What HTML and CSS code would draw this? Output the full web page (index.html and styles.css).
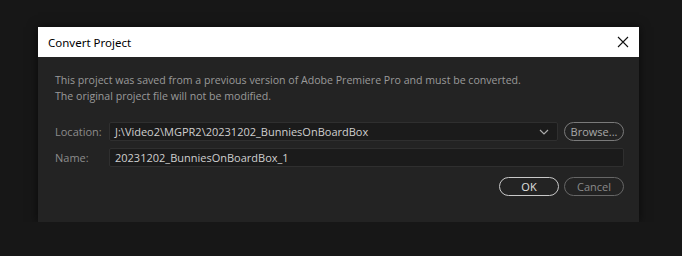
FILE: index.html
```html
<!DOCTYPE html>
<html lang="en">
<head>
    <meta charset="UTF-8">
    <title>Convert Project</title>
    <link rel="stylesheet" href="styles.css">
</head>
<body>
    <div class="dialog">
        <div class="titlebar">
            <span class="title">Convert Project</span>
            <svg class="close" width="12" height="12" viewBox="0 0 12 12">
                <path d="M1 1 L11 11 M11 1 L1 11" stroke="#111" stroke-width="1.1" fill="none"/>
            </svg>
        </div>
        <div class="content">
            <p class="message">This project was saved from a previous version of Adobe Premiere Pro and must be converted.<br>The original project file will not be modified.</p>
            <div class="row">
                <label>Location:</label>
                <div class="select">
                    <span>J:\Video2\MGPR2\20231202_BunniesOnBoardBox</span>
                    <svg width="10" height="6" viewBox="0 0 10 6"><path d="M1 1 L5 5 L9 1" stroke="#aaa" stroke-width="1.2" fill="none"/></svg>
                </div>
                <button class="btn">Browse...</button>
            </div>
            <div class="row">
                <label>Name:</label>
                <div class="input">20231202_BunniesOnBoardBox_1</div>
            </div>
            <div class="actions">
                <button class="btn primary">OK</button>
                <button class="btn muted">Cancel</button>
            </div>
        </div>
    </div>
</body>
</html>
```

FILE: styles.css
```css
body {
    margin: 0;
    background: #171717;
    font-family: 'Open Sans', 'Noto Sans', sans-serif;
    padding: 27px 0 0 38px;
}
.dialog {
    width: 601px;
    height: 195px;
    background: #232323;
    box-shadow: 0 0 10px rgba(0, 0, 0, 0.6);
}
.titlebar {
    height: 30px;
    background: #ffffff;
    display: flex;
    align-items: center;
    justify-content: space-between;
    padding: 0 10px 0 10px;
}
.title {
    font-family: 'Noto Sans', sans-serif;
    font-size: 11.5px;
    color: #000;
}
.content {
    padding: 0 15px 0 17px;
}
.message {
    margin: 0;
    padding-top: 15px;
    font-size: 10.6px;
    line-height: 16px;
    color: #9a9a9a;
    height: 34px;
}
.row {
    display: flex;
    align-items: center;
    height: 19px;
}
.row + .row {
    margin-top: 7px;
}
.message + .row {
    margin-top: 16px;
}
label {
    width: 54px;
    font-size: 11px;
    color: #8c8c8c;
}
.select, .input {
    box-sizing: border-box;
    height: 19px;
    background: #1b1b1b;
    border: 1px solid #2f2f2f;
    border-radius: 2px;
    font-size: 11px;
    color: #cfcfcf;
    display: flex;
    align-items: center;
    justify-content: space-between;
    padding: 0 8px 0 5px;
}
.select {
    width: 449px;
}
.input {
    width: 515px;
}
.btn {
    box-sizing: border-box;
    height: 19px;
    width: 60px;
    margin-left: 6px;
    border-radius: 10px;
    background: transparent;
    border: 1px solid #7a7a7a;
    color: #a8a8a8;
    font-family: 'Open Sans', 'Noto Sans', sans-serif;
    font-size: 11px;
    padding: 0;
}
.actions {
    display: flex;
    justify-content: flex-end;
    margin-top: 10px;
}
.primary {
    border-color: #c8c8c8;
    color: #e0e0e0;
}
.muted {
    border-color: #666;
    color: #8a8a8a;
    margin-left: 5px;
}
```
